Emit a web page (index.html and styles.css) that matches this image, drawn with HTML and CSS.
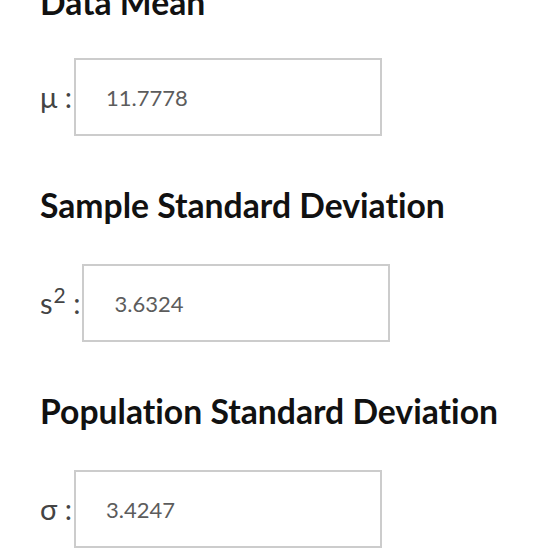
FILE: index.html
```html
<!DOCTYPE html>
<html>
<head>
<meta charset="utf-8">
<link rel="stylesheet" href="styles.css">
</head>
<body>
<div class="results">
  <section class="stat">
    <h3 class="stat-title">Data Mean</h3>
    <div class="stat-row">
      <span class="stat-label">μ :</span>
      <div class="stat-box">11.7778</div>
    </div>
  </section>
  <section class="stat">
    <h3 class="stat-title">Sample Standard Deviation</h3>
    <div class="stat-row">
      <span class="stat-label">s<sup>2</sup> :</span>
      <div class="stat-box">3.6324</div>
    </div>
  </section>
  <section class="stat">
    <h3 class="stat-title">Population Standard Deviation</h3>
    <div class="stat-row">
      <span class="stat-label">σ :</span>
      <div class="stat-box">3.4247</div>
    </div>
  </section>
</div>
</body>
</html>
```
FILE: styles.css
```css
html, body {
  margin: 0;
  padding: 0;
  background: #fff;
}
body {
  font-family: Lato, "Open Sans", sans-serif;
  overflow: hidden;
}
.results {
  display: flex;
  flex-direction: column;
  gap: 49px;
  padding: 0 40px;
  margin-top: -18px;
}
.stat {
  display: flex;
  flex-direction: column;
  gap: 39px;
}
.stat:first-child {
  gap: 36px;
}
.stat-title {
  margin: 0;
  font-size: 33.7px;
  line-height: 40px;
  font-weight: 700;
  color: #111;
  font-variant-ligatures: none;
  white-space: nowrap;
}
.stat-row {
  display: flex;
  align-items: center;
  gap: 2px;
}
.stat-label {
  font-size: 29px;
  color: #444;
  line-height: 30px;
}
.stat-label sup {
  font-size: 21px;
  line-height: 0;
  margin-left: 1px;
}
.stat-box {
  box-sizing: border-box;
  width: 308px;
  height: 78px;
  border: 2px solid #ccc;
  padding: 0 0 0 30px;
  display: flex;
  align-items: center;
  font-size: 22px;
  color: #5c5c5c;
}
```
